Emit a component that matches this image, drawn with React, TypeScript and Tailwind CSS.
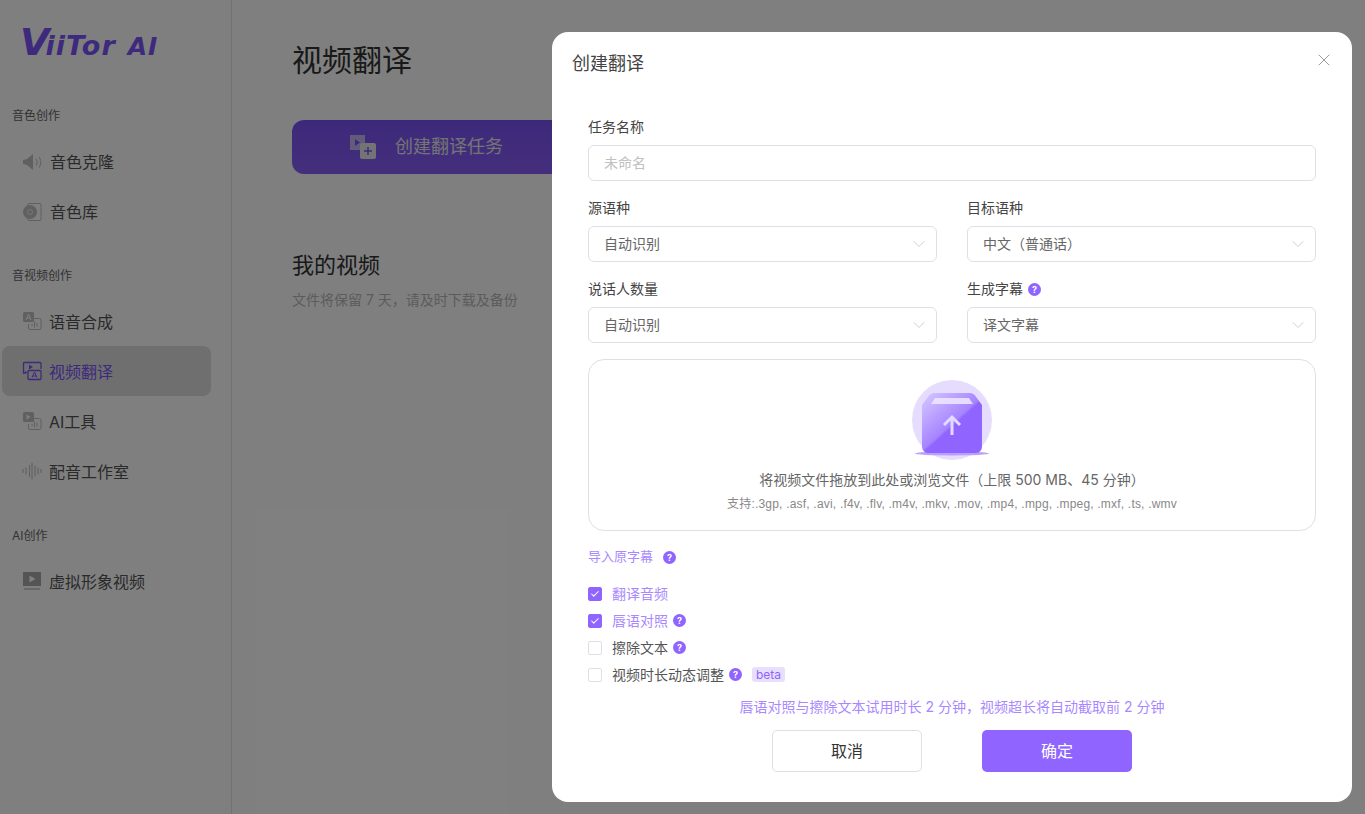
import { ChevronDown, X, Check } from 'lucide-react';
import type { ReactNode } from 'react';

const font = 'font-["Inter","Noto_Sans_CJK_SC",sans-serif]';

// sidebar icons
const IconVoice = () => (
  <svg width="20" height="20" viewBox="0 0 20 20" fill="none">
    <path d="M1 8l4-1 6-5v16l-6-5-4-1z" fill="#c0c0c0" />
    <path d="M14 7c1.500 2 1.500 4.500 0 6.500M17 5c2.500 3 2.500 7.500 0 10.500" stroke="#c4c4c4" strokeWidth="1.100" />
  </svg>
);
const IconLibrary = () => (
  <svg width="20" height="20" viewBox="0 0 20 20" fill="none">
    <rect x="6" y="1.500" width="13" height="17" rx="1" stroke="#c0c0c0" />
    <circle cx="8" cy="10" r="7" fill="#c0c0c0" />
    <circle cx="8" cy="10" r="2.500" stroke="#eeeeee" />
  </svg>
);
const IconSpeech = ({ play }: { play?: boolean }) => (
  <svg width="20" height="20" viewBox="0 0 20 20" fill="none">
    <rect x="1" y="1" width="11" height="10" rx="1.500" fill="#c0c0c0" />
    {play ? (
      <path d="M4.500 3.500v5l4-2.500z" fill="#fff" />
    ) : (
      <path d="M4 9l2.500-6L9 9M4.800 7h3.400" stroke="#fff" strokeWidth="1" />
    )}
    <path d="M12 7.500h5.500a1.500 1.500 0 0 1 1.500 1.500v8a1.500 1.500 0 0 1-1.500 1.500H8a1.500 1.500 0 0 1-1.500-1.500v-4" stroke="#c0c0c0" />
    <path d="M10 13v2M12.500 10.500v6M15 12v3.500" stroke="#c0c0c0" />
  </svg>
);
const IconVideoTranslate = () => (
  <svg width="20" height="20" viewBox="0 0 20 20" fill="none" stroke="#7c54fb" strokeWidth="1.300">
    <path d="M3 12H1.500V2.500a1 1 0 0 1 1-1H18a1 1 0 0 1 1 1V8" />
    <path d="M7 3.500v5l4-2.500z" fill="#7c54fb" stroke="none" />
    <rect x="6" y="9.500" width="13" height="9" rx="1" />
    <path d="M10 16.500l2.500-5.500 2.500 5.500M10.800 15h3.400" strokeWidth="1" />
    <path d="M3 10v3l2.500-1.500z" fill="#7c54fb" stroke="none" />
  </svg>
);
const IconWave = () => (
  <svg width="20" height="20" viewBox="0 0 20 20" fill="none" stroke="#c0c0c0" strokeWidth="1.100">
    <path d="M1 8v4M4 6.500v7M7.500 4v12M10 1.500v17M13 4.500v11M16 6.500v7M19 8v4" />
  </svg>
);
const IconAvatarVideo = () => (
  <svg width="20" height="20" viewBox="0 0 20 20" fill="none">
    <rect x="1" y="1" width="18" height="14" fill="#a8a8a8" />
    <path d="M7.500 4.500v7l6-3.500z" fill="#fff" />
    <path d="M2 18h16" stroke="#c0c0c0" strokeWidth="1.500" />
  </svg>
);

const IconCreate = () => (
  <svg width="26" height="24" viewBox="0 0 26 24" fill="none">
    <rect x="0" y="0" width="15" height="15" fill="#d8d0f2" opacity="0.8" />
    <path d="M5 4v7l5-3.500z" fill="#7c54fb" />
    <rect x="10" y="8" width="16" height="16" rx="2" fill="#e8e8e8" />
    <path d="M18 12v8M14 16h8" stroke="#7c54fb" strokeWidth="1.500" />
  </svg>
);

const UploadArt = () => (
  <svg width="80" height="80" viewBox="0 0 80 80" fill="none">
    <defs>
      <linearGradient id="box" x1="12" y1="15" x2="58" y2="66" gradientUnits="userSpaceOnUse">
        <stop offset="0" stopColor="#d4c5ff" />
        <stop offset="0.58" stopColor="#a684ff" />
        <stop offset="0.62" stopColor="#9065ff" />
        <stop offset="1" stopColor="#9065ff" />
      </linearGradient>
    </defs>
    <circle cx="40" cy="40" r="40" fill="#e6dcfd" />
    <ellipse cx="40" cy="73.500" rx="37" ry="2" fill="#b9a0fb" />
    <path
      d="M10 25L17 15.500a6 6 0 0 1 4.500-2.500h37a6 6 0 0 1 4.500 2.500L70 25V67a6 6 0 0 1-6 6H16a6 6 0 0 1-6-6z"
      fill="url(#box)"
    />
    <path d="M23 18h34l4 6H19z" fill="#efe9ff" opacity="0.85" />
    <path d="M40 55V37M32 45l8-8 8 8" stroke="#e4daff" strokeWidth="3" />
  </svg>
);

const Help = () => (
  <span className="inline-flex h-[13px] w-[13px] shrink-0 items-center justify-center rounded-full bg-[#9065ff] text-[9px] font-bold leading-none text-white">
    ?
  </span>
);

function NavSection({ title, children, className, tight }: { title: string; children: ReactNode; className?: string; tight?: boolean }) {
  return (
    <div className={className}>
      <div className="pl-3 text-xs leading-5 text-[#666666]">{title}</div>
      <div className={`flex flex-col ${tight ? 'mt-2.5' : 'mt-[11px]'}`}>{children}</div>
    </div>
  );
}

function NavItem({ icon, label, active, first }: { icon: ReactNode; label: string; active?: boolean; first?: boolean }) {
  return (
    <div className={`mx-0.5 flex h-[50px] w-[209px] items-center rounded-lg pl-5 ${active ? 'bg-[#dedede]' : ''}`}>
      <span className="flex w-5 shrink-0 justify-center">{icon}</span>
      <span className={`${first ? 'ml-2' : 'ml-[7px] mt-0.5'} text-base ${active ? 'text-[#7c54fb]' : 'text-[#555555]'}`}>{label}</span>
    </div>
  );
}

function Field({ label, help, value }: { label: string; help?: boolean; value: string }) {
  return (
    <div className="flex-1">
      <div className="flex h-5 items-center gap-[5px] text-sm text-[#444444]">
        {label}
        {help && <Help />}
      </div>
      <div className="mt-2 flex h-9 items-center justify-between rounded-md border border-[#dfdfe8] pl-[15px] pr-[7px] text-sm text-[#666666]">
        {value}
        <ChevronDown size={20} strokeWidth={0.8} className="text-[#b5b5b5]" />
      </div>
    </div>
  );
}

function CheckRow({ label, checked, help, beta }: { label: string; checked?: boolean; help?: boolean; beta?: boolean }) {
  return (
    <div className="flex h-[27px] items-center">
      <span
        className={`flex h-3.5 w-3.5 items-center justify-center rounded-[2px] border ${
          checked ? 'border-[#9065ff] bg-[#9065ff]' : 'border-[#dfdfe8] bg-white'
        }`}
      >
        {checked && <Check size={10} strokeWidth={2.5} className="text-white" />}
      </span>
      <span className={`ml-2.5 text-sm ${checked ? 'text-[#a988ff]' : 'text-[#555555]'}`}>{label}</span>
      {help && <span className="ml-[5px] flex"><Help /></span>}
      {beta && (
        <span className="ml-[10px] rounded-[3px] bg-[#e8dffc] px-1 text-xs leading-[15px] text-[#9065ff]">beta</span>
      )}
    </div>
  );
}

export default function App() {
  return (
    <div className={`relative flex h-screen w-full overflow-hidden bg-white ${font}`}>
      {/* Sidebar */}
      <aside className="flex w-[232px] shrink-0 flex-col border-r border-[#e4e4e4]">
        <div className="h-[106px] pl-5 pt-[19px]">
          <div className="flex items-baseline font-['DejaVu_Sans',sans-serif] font-bold italic leading-[46px] text-[#7c54fb]">
            <span className="text-[38px] tracking-[-4px]">V</span>
            <span className="text-[27px] tracking-[1px]">iiTor</span>
            <span className="ml-3 text-[25px] tracking-[1px]">AI</span>
          </div>
        </div>
        <NavSection title="音色创作">
          <NavItem first icon={<IconVoice />} label="音色克隆" />
          <NavItem first icon={<IconLibrary />} label="音色库" />
        </NavSection>
        <NavSection title="音视频创作" className="mt-[29px]" tight>
          <NavItem icon={<IconSpeech />} label="语音合成" />
          <NavItem icon={<IconVideoTranslate />} label="视频翻译" active />
          <NavItem icon={<IconSpeech play />} label="AI工具" />
          <NavItem icon={<IconWave />} label="配音工作室" />
        </NavSection>
        <NavSection title="AI创作" className="mt-[30px]" tight>
          <NavItem icon={<IconAvatarVideo />} label="虚拟形象视频" />
        </NavSection>
      </aside>

      {/* Main */}
      <main className="flex-1 pl-[60px]">
        <h1 className="mt-[38px] text-3xl leading-[44px] text-[#333333]">视频翻译</h1>
        <div className="mt-[38px] flex h-[54px] w-[300px] items-center gap-[19px] rounded-xl bg-gradient-to-b from-[#7a52f5] to-[#8a5efa] pl-[58px]">
          <IconCreate />
          <span className="text-lg text-[#e8e8e8]">创建翻译任务</span>
        </div>
        <h2 className="mt-[75px] text-[22px] leading-8 text-[#333333]">我的视频</h2>
        <p className="mt-[9px] text-sm leading-5 text-[#b8b8b8]">文件将保留 7 天，请及时下载及备份</p>
      </main>

      {/* Dialog overlay */}
      <div className="absolute inset-0 flex items-start justify-end bg-black/50 pr-[13px] pt-8">
        <div className="relative h-[770px] w-[800px] rounded-2xl bg-white">
          <X size={20} strokeWidth={1} className="absolute right-[18px] top-[18px] text-[#888888]" />
          <div className="pl-5 pt-[18px] text-lg leading-7 text-[#444444]">创建翻译</div>

          <div className="px-9 pt-[39px]">
            <div className="h-5 text-sm text-[#444444]">任务名称</div>
            <div className="mt-2 flex h-9 items-center rounded-md border border-[#dfdfe8] pl-[15px] text-sm text-[#c0c0c0]">
              未命名
            </div>

            <div className="mt-[17px] flex gap-[30px]">
              <Field label="源语种" value="自动识别" />
              <Field label="目标语种" value="中文（普通话）" />
            </div>
            <div className="mt-[17px] flex gap-[30px]">
              <Field label="说话人数量" value="自动识别" />
              <Field label="生成字幕" help value="译文字幕" />
            </div>

            <div className="mt-4 flex h-[172px] flex-col items-center rounded-2xl border border-[#dfdfe8] pt-5">
              <UploadArt />
              <div className="mt-[10px] text-sm leading-5 text-[#666666]">
                将视频文件拖放到此处或浏览文件（上限 500 MB、45 分钟）
              </div>
              <div className="mt-1 font-['Liberation_Sans','Noto_Sans_CJK_SC',sans-serif] text-xs leading-5 tracking-[0.2px] text-[#888888]">
                支持:.3gp, .asf, .avi, .f4v, .flv, .m4v, .mkv, .mov, .mp4, .mpg, .mpeg, .mxf, .ts, .wmv
              </div>
            </div>

            <div className="mt-4 flex h-5 items-center gap-2.5 text-[13px] text-[#a988ff]">
              导入原字幕
              <Help />
            </div>

            <div className="mt-[13px] flex flex-col">
              <CheckRow label="翻译音频" checked />
              <CheckRow label="唇语对照" checked help />
              <CheckRow label="擦除文本" help />
              <CheckRow label="视频时长动态调整" help beta />
            </div>

            <div className="mt-[9px] text-center text-sm leading-5 text-[#a988ff]">
              唇语对照与擦除文本试用时长 2 分钟，视频超长将自动截取前 2 分钟
            </div>

            <div className="mt-[13px] flex justify-center gap-[60px]">
              <button className="h-[42px] w-[150px] rounded-[5px] border border-[#dfdfe8] bg-white text-base text-[#333333]">
                取消
              </button>
              <button className="h-[42px] w-[150px] rounded-[5px] bg-[#9065ff] text-base text-white">确定</button>
            </div>
          </div>
        </div>
      </div>
    </div>
  );
}
